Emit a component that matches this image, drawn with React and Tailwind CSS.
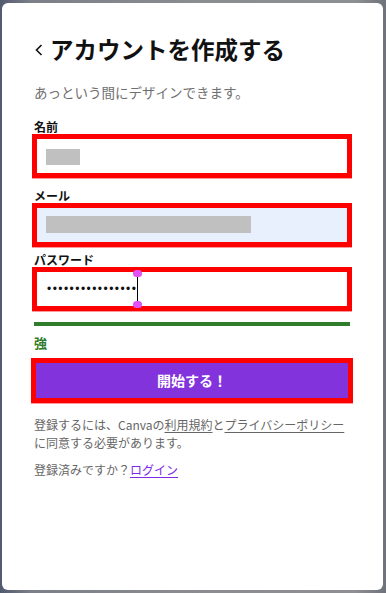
import React from 'react';

const jp = { fontFamily: '"Noto Sans CJK JP", "Noto Sans", sans-serif' };

const Field = ({ label, children, boxClass = 'bg-white' }) => (
  <div className="flex flex-col">
    <label className="h-[14px] text-[12px] leading-[14px] font-bold text-[#111] pl-[2px]">{label}</label>
    <div className={`h-[44px] border-[5px] border-[#ff0000] shadow-[0_1px_0_#ff9a9a] flex items-center px-[9px] ${boxClass}`}>
      {children}
    </div>
  </div>
);

const App = () => {
  return (
    <div className="w-[386px] h-[593px] bg-[linear-gradient(90deg,#525a70_0%,#7c7f87_8%,#8a8c90_50%,#8e8f93_92%,#6f727a_100%)] pt-[3px] pl-[2px]" style={jp}>
      <div className="w-[381px] h-[587px] bg-white rounded-[6px] pt-[30px] pl-[30px] pr-[31px] flex flex-col">
        {/* Header */}
        <div className="flex items-center h-[32px]">
          <svg width="10" height="14" viewBox="0 0 10 14" className="ml-[2px] mr-[6px] mt-[2px]">
            <polyline points="7.5,2 2.5,7 7.5,12" fill="none" stroke="#111" strokeWidth="1.6" />
          </svg>
          <h1 className="text-[23.5px] leading-[32px] font-bold text-[#111]">アカウントを作成する</h1>
        </div>
        <p className="mt-[17px] text-[13.5px] leading-[20px] text-[#707070] pl-[2px]">あっという間にデザインできます。</p>

        {/* Form */}
        <div className="mt-[18px] flex flex-col gap-[11px]">
          <Field label="名前">
            <div className="w-[34px] h-[16px] bg-[#c0c0c0] mt-[2px]" />
          </Field>
          <Field label="メール" boxClass="bg-[#e8f0fe]">
            <div className="w-[205px] h-[17px] bg-[#c0c0c0] -mt-[1px]" />
          </Field>
        </div>
        <div className="mt-[6px]">
          <Field label="パスワード">
            <div className="flex items-center pl-px">
              <span className="text-[12px] leading-[14px] tracking-[1.45px] text-[#111]" style={{ fontFamily: '"Liberation Sans", sans-serif' }}>
                {'•'.repeat(16)}
              </span>
              <span className="relative w-px h-[26px] bg-black">
                <span className="absolute -left-[4px] -top-[6px] w-[9px] h-[7px] rounded-full bg-[#e251f5]" />
                <span className="absolute -left-[4px] -bottom-[6px] w-[9px] h-[7px] rounded-full bg-[#e251f5]" />
              </span>
            </div>
          </Field>
        </div>

        {/* Strength */}
        <div className="mt-[11px] mx-[2px] h-[4px] bg-[#2f7d2b]" />
        <div className="mt-[9px] text-[13px] leading-[16px] text-[#2f7d2b] font-bold pl-[2px]">強</div>

        <button className="mt-[7px] -mx-px h-[45px] border-[5px] border-[#ff0000] bg-[#8233dc] text-white text-[14px] font-bold flex items-center justify-center shadow-[0_1px_0_#ff9a9a]" style={jp}>
          開始する！
        </button>

        <p className="mt-[13px] text-[12px] leading-[18px] text-[#666] pl-[2px]">
          登録するには、Canvaの<span className="underline underline-offset-2">利用規約</span>と<span className="underline underline-offset-2">プライバシーポリシー</span>に同意する必要があります。
        </p>
        <p className="mt-[9px] text-[12px] leading-[18px] text-[#666] pl-[2px]">
          登録済みですか？<a className="text-[#7d2ae8] underline underline-offset-2">ログイン</a>
        </p>
      </div>
    </div>
  );
};

export default App;
